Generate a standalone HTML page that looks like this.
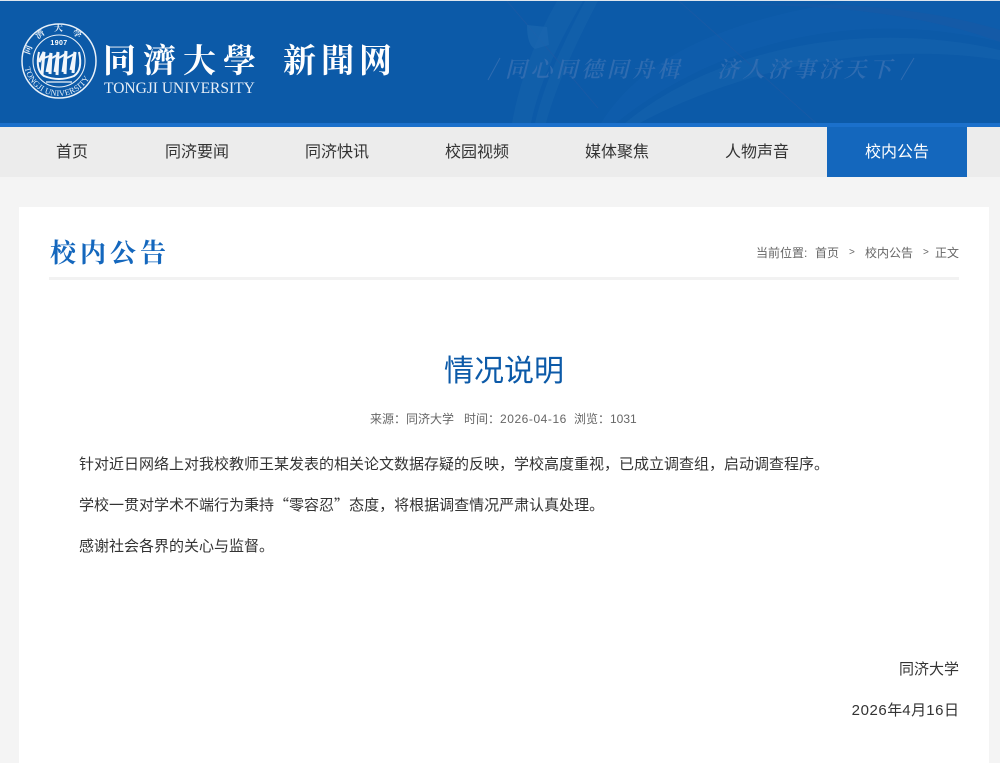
<!DOCTYPE html>
<html lang="zh-CN"><head><meta charset="utf-8"><title>情况说明</title>
<style>
*{margin:0;padding:0;box-sizing:border-box}
html,body{width:1000px;height:763px;overflow:hidden;background:#f4f4f4}
body{position:relative;font-family:"Liberation Sans","Noto Sans CJK SC",sans-serif;color:#333}
.a{position:absolute;white-space:nowrap}
.nav{position:absolute;top:127px;left:0;width:1000px;height:50px;background:#ececec}
.nav span{position:absolute;top:0;height:50px;line-height:52px;font-size:16px;color:#333;text-align:center;width:140px}
.p{font-size:15px;color:#333;line-height:20px}
.q{font-family:"Noto Sans CJK SC",sans-serif}
.d{letter-spacing:.55px}
.c{font-size:12px;line-height:18px;color:#666}
.serif{font-family:"Liberation Serif","Noto Serif CJK SC",serif}
.s{font-size:22px;line-height:30px;color:#2f6cb1;letter-spacing:3.4px;font-style:italic;font-weight:600;font-family:"Noto Serif CJK SC",serif}
</style></head><body>
<div class="a" style="left:0;top:0;width:1000px;height:1px;background:#dfe6ee"></div>
<svg class="a" style="left:0;top:1px" width="1000" height="122" viewBox="0 1 1000 122">
<rect x="0" y="1" width="1000" height="122" fill="#0c5aa8"/>
<path d="M512 123 C520 80 535 40 557 1 L583 1 C560 40 540 80 531 123Z" fill="#1663ac" opacity=".6"/>
<path d="M535 123 C545 80 565 40 585 1 L598 1 C578 40 558 80 546 123Z" fill="#1663ac" opacity=".5"/>
<path d="M601 123 C640 60 720 20 850 1 L1000 1 L1000 42 C860 8 720 40 616 123Z" fill="#0f5dab" opacity=".8"/>
<path d="M640 123 C740 70 870 40 1000 60 L1000 50 C870 20 720 45 625 123Z" fill="#1563ad" opacity=".5"/>
<path d="M700 8 C800 0 920 12 1000 42 L1000 30 C920 5 800 -2 700 8Z" fill="#1a57a3" opacity=".5"/>
<path d="M507 1 L598 108 M679 1 L816 123" stroke="#2459a3" stroke-width="1" fill="none" opacity=".5"/>
<path d="M527 25 L547 27 L549 45 L535 49 Q527 45 527 25Z" fill="#1b66af" opacity=".7"/>
<path d="M500 58 L488 80 M914 58 L901 80" stroke="#2f6cb1" stroke-width="1" fill="none"/>
</svg>
<svg class="a" style="left:20px;top:22px" width="78" height="78" viewBox="0 0 78 78">
<circle cx="39" cy="39" r="37" fill="none" stroke="#e8f0f8" stroke-width="1.5"/>
<circle cx="39" cy="39" r="26" fill="none" stroke="#e8f0f8" stroke-width="1.1"/>
<path id="t1" d="M9 39 A30 30 0 0 1 69 39" fill="none"/>
<path id="t2" d="M4 39 A35 35 0 0 0 74 39" fill="none"/>
<text font-size="9" font-weight="700" fill="#e8f0f8" font-family="Noto Serif CJK SC,serif"><textPath href="#t1" startOffset="6">同　濟　大　學</textPath></text>
<text font-size="8.4" fill="#e8f0f8" font-family="Liberation Serif,serif" letter-spacing=".2"><textPath href="#t2" startOffset="7">TONGJI UNIVERSITY</textPath></text>
<text x="39" y="23" text-anchor="middle" font-size="7" font-weight="bold" fill="#fff" font-family="Liberation Sans,sans-serif" letter-spacing=".4">1907</text>
<path d="M19 30 Q15 48 24 54 Q39 60 54 54 Q63 48 59 30" fill="none" stroke="#f2f6fb" stroke-width="2"/>
<path d="M19 40 L24 30 L22 52 M27 50 L31 31 L30 52 M35 50 L38 30 L37 53 M43 50 L46 29 L45 52 M51 48 L55 30 L53 51" fill="none" stroke="#f2f6fb" stroke-width="3"/>
<path d="M24 36 L32 33 M32 36 L39 32 M39 36 L47 31 M47 36 L56 31" stroke="#f2f6fb" stroke-width="2"/>
<path d="M26 60 H52" stroke="#f2f6fb" stroke-width="1.2"/>
</svg>
<div class="a serif" style="left:103px;top:39px;font-size:33px;line-height:46px;font-weight:700;color:#fff;letter-spacing:7px">同濟大學</div>
<div class="a serif" style="left:283px;top:39px;font-size:33px;line-height:46px;font-weight:700;color:#fff;letter-spacing:5px">新聞网</div>
<div class="a" style="left:104px;top:80px;font:15.5px/18px 'Liberation Serif',serif;color:#e6eef7">TONGJI UNIVERSITY</div>
<div class="a s" style="left:505px;top:54px">同心同德同舟楫</div>
<div class="a s" style="left:717px;top:54px">济人济事济天下</div>
<div class="a" style="left:0;top:123px;width:1000px;height:4px;background:#1b70cb"></div>
<div class="nav">
<span style="left:2px">首页</span><span style="left:127px">同济要闻</span><span style="left:267px">同济快讯</span><span style="left:407px">校园视频</span><span style="left:547px">媒体聚焦</span><span style="left:687px">人物声音</span>
<span style="left:827px;background:#1467bd;color:#fff">校内公告</span>
</div>
<div class="a" style="left:19px;top:207px;width:970px;height:556px;background:#fff"></div>
<div class="a serif" style="left:50px;top:235px;font-size:26px;line-height:38px;font-weight:700;color:#1467bd;letter-spacing:4px">校内公告</div>
<div class="a" style="left:49px;top:277px;width:910px;height:3px;background:#f2f2f2"></div>
<div class="a c" style="left:756px;top:244px">当前位置:</div>
<div class="a c" style="left:815px;top:244px">首页</div>
<div class="a c" style="left:849px;top:244px;font-size:10px">&gt;</div>
<div class="a c" style="left:865px;top:244px">校内公告</div>
<div class="a c" style="left:923px;top:244px;font-size:10px">&gt;</div>
<div class="a c" style="left:935px;top:244px">正文</div>
<div class="a" style="left:19px;top:350px;width:970px;text-align:center;font-size:30px;line-height:44px;color:#0c5aa8">情况说明</div>
<div class="a c" style="left:370px;top:410px">来源：同济大学</div>
<div class="a c" style="left:464px;top:410px">时间：<span class="d">2026-04-16</span></div>
<div class="a c" style="left:574px;top:410px">浏览：1031</div>
<div class="a p" style="left:79px;top:455px">针对近日网络上对我校教师王某发表的相关论文数据存疑的反映，学校高度重视，已成立调查组，启动调查程序。</div>
<div class="a p" style="left:79px;top:495px">学校一贯对学术不端行为秉持<span class="q">“</span>零容忍<span class="q">”</span>态度，将根据调查情况严肃认真处理。</div>
<div class="a p" style="left:79px;top:537px">感谢社会各界的关心与监督。</div>
<div class="a p" style="right:41px;top:660px">同济大学</div>
<div class="a p" style="right:41px;top:701px"><span class="d">2026</span>年<span class="d">4</span>月<span class="d">16</span>日</div>
</body></html>
